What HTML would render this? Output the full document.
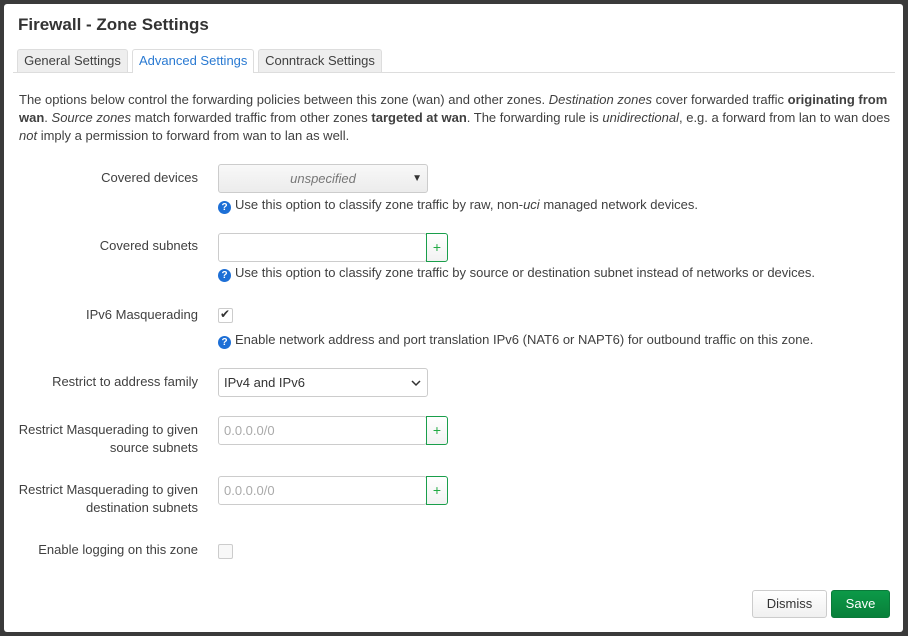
<!DOCTYPE html>
<html><head><meta charset="utf-8"><style>
body{margin:0;width:908px;height:636px;background:#3a3a3a;font-family:"Liberation Sans",sans-serif;font-size:13px;color:#404040;position:relative;overflow:hidden}
.m{position:absolute;left:4px;top:4px;width:899px;height:628px;background:#fff;border-radius:3px}
.a{position:absolute;white-space:nowrap}
.lbl{position:absolute;right:710px;text-align:right;line-height:18px;white-space:nowrap}
.tab{position:absolute;top:49px;height:23px;line-height:22px;background:#eee;border:1px solid #ddd;border-bottom:none;padding:0 6px;font-size:13px;box-sizing:border-box;color:#404040;border-radius:3px 3px 0 0;white-space:nowrap;text-align:center}
.inp{position:absolute;left:218px;width:209px;height:29px;border:1px solid #ccc;border-radius:3px;box-sizing:border-box;background:#fff}
.plus{position:absolute;left:426px;width:22px;height:29px;border:1px solid #1a9e4b;border-radius:0 3px 3px 0;box-sizing:border-box;color:#22aa44;text-align:center;line-height:26px;font-size:14px;background:linear-gradient(#fff,#f2f2f2)}
.ph{color:#aaa;position:absolute;left:5px;top:6px}
.q{display:inline-block;width:13px;height:13px;border-radius:50%;background:#1d6fd6;color:#fff;font-weight:bold;font-size:10px;text-align:center;line-height:13px;vertical-align:-1px;margin-right:4px}
.cb{position:absolute;left:218px;width:13px;height:13px;border:1px solid #ccc;border-radius:2px;background:#f8f8f8}
</style></head><body>
<div class="m"></div>
<div class="a" style="left:18px;top:15px;font-size:17px;font-weight:bold;color:#333">Firewall - Zone Settings</div>
<div style="position:absolute;left:13px;top:72px;width:882px;border-top:1px solid #ddd"></div>
<div class="tab" style="left:17px;width:111px">General Settings</div>
<div class="tab" style="left:132px;width:122px;background:#fff;color:#2a7ad2;height:24px">Advanced Settings</div>
<div class="tab" style="left:258px;width:124px">Conntrack Settings</div>
<div class="a" style="left:19px;top:91px;line-height:18px;white-space:normal;width:875px">The options below control the forwarding policies between this zone (wan) and other zones. <i>Destination zones</i> cover forwarded traffic <b>originating from wan</b>. <i>Source zones</i> match forwarded traffic from other zones <b>targeted at wan</b>. The forwarding rule is <i>unidirectional</i>, e.g. a forward from lan to wan does <i>not</i> imply a permission to forward from wan to lan as well.</div>

<div class="lbl" style="top:169px">Covered devices</div>
<div class="inp" style="top:164px;width:210px;background:linear-gradient(#f8f8f8,#ececec)"><span style="position:absolute;left:0;right:0;text-align:center;top:6px;color:#777;font-style:italic">unspecified</span><span style="position:absolute;right:5px;top:8px;font-size:10px;color:#333">▼</span></div>
<div class="a" style="left:218px;top:197px"><span class="q">?</span>Use this option to classify zone traffic by raw, non-<i>uci</i> managed network devices.</div>

<div class="lbl" style="top:237px">Covered subnets</div>
<div class="inp" style="top:233px;width:209px"></div><div class="plus" style="top:233px">+</div>
<div class="a" style="left:218px;top:265px"><span class="q">?</span>Use this option to classify zone traffic by source or destination subnet instead of networks or devices.</div>

<div class="lbl" style="top:306px">IPv6 Masquerading</div>
<div class="cb" style="top:308px;background:#fff"><span style="position:absolute;left:1px;top:-2px;font-size:12px;color:#333">✔</span></div>
<div class="a" style="left:218px;top:332px"><span class="q">?</span>Enable network address and port translation IPv6 (NAT6 or NAPT6) for outbound traffic on this zone.</div>

<div class="lbl" style="top:373px">Restrict to address family</div>
<div class="inp" style="top:368px;width:210px"><span style="position:absolute;left:5px;top:6px;color:#333">IPv4 and IPv6</span><svg style="position:absolute;right:6px;top:11px" width="10" height="7"><path d="M1 1l4 4 4-4" stroke="#333" stroke-width="1.5" fill="none"/></svg></div>

<div class="lbl" style="top:421px">Restrict Masquerading to given<br>source subnets</div>
<div class="inp" style="top:416px"><span class="ph">0.0.0.0/0</span></div><div class="plus" style="top:416px">+</div>

<div class="lbl" style="top:481px">Restrict Masquerading to given<br>destination subnets</div>
<div class="inp" style="top:476px"><span class="ph">0.0.0.0/0</span></div><div class="plus" style="top:476px">+</div>

<div class="lbl" style="top:541px">Enable logging on this zone</div>
<div class="cb" style="top:544px"></div>

<div class="a" style="left:752px;top:590px;width:75px;height:28px;border:1px solid #ccc;border-radius:3px;background:linear-gradient(#fff,#f0f0f0);box-sizing:border-box;text-align:center;line-height:26px;color:#333">Dismiss</div>
<div class="a" style="left:831px;top:590px;width:59px;height:28px;border:1px solid #0a7a3a;border-radius:3px;background:linear-gradient(#0c9a48,#08803a);box-sizing:border-box;text-align:center;line-height:26px;color:#fff">Save</div>
</body></html>
